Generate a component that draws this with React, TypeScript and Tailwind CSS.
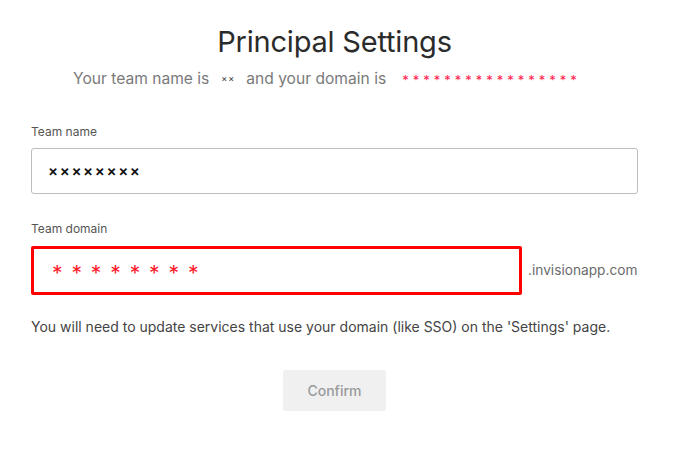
import React from "react";

export default function App() {
  const font = { fontFamily: "Inter, 'Noto Sans', sans-serif" };
  return (
    <div className="w-[684px] h-[453px] bg-white" style={font}>
      <div className="pl-[31px] pt-[25px] w-[638px]">
        <h1 className="text-center text-[29px] leading-[34px] text-[#2b2b2b] font-normal tracking-[-0.2px]">
          Principal Settings
        </h1>
        <p className="mt-[10px] pl-[42px] text-[15.6px] leading-[20px] text-[#7a7a7a] flex items-center">
          <span>Your team name is</span>
          <span className="ml-[12px] text-[9px] tracking-[1px] text-[#333]">××</span>
          <span className="ml-[11px]">and your domain is</span>
          <span className="ml-[16px] text-[13px] leading-[13px] pt-[3px] tracking-[4px] text-[#ff1a4a]">*****************</span>
        </p>
        <div className="pt-[36px]">
          <label className="block text-[12px] leading-[14px] text-[#555]">Team name</label>
          <div className="mt-[9px] h-[46px] w-[607px] rounded-[3px] border border-[#bdbdbd] flex items-center pl-[16px]">
            <span className="text-[15px] tracking-[1.6px] text-[#111] font-semibold">××××××××</span>
          </div>
          <label className="block mt-[28px] text-[12px] leading-[14px] text-[#555]">Team domain</label>
          <div className="mt-[10px] flex items-center">
            <div className="h-[49px] w-[491px] rounded-[2px] border-[3px] border-[#ff0000] flex items-center pl-[18px]">
              <span className="text-[21px] leading-[20px] tracking-[8.9px] text-[#ff1a2a] pt-[6px]">********</span>
            </div>
            <span className="ml-[6px] text-[13.7px] text-[#6b6b6b]">.invisionapp.com</span>
          </div>
          <p className="mt-[23px] text-[14px] leading-[18px] text-[#444]">
            You will need to update services that use your domain (like SSO) on the 'Settings' page.
          </p>
          <div className="flex justify-center mt-[34px]">
            <button className="w-[103px] h-[41px] rounded-[3px] bg-[#f0f0f0] text-[14px] text-[#9a9a9a] font-medium">
              Confirm
            </button>
          </div>
        </div>
      </div>
    </div>
  );
}
